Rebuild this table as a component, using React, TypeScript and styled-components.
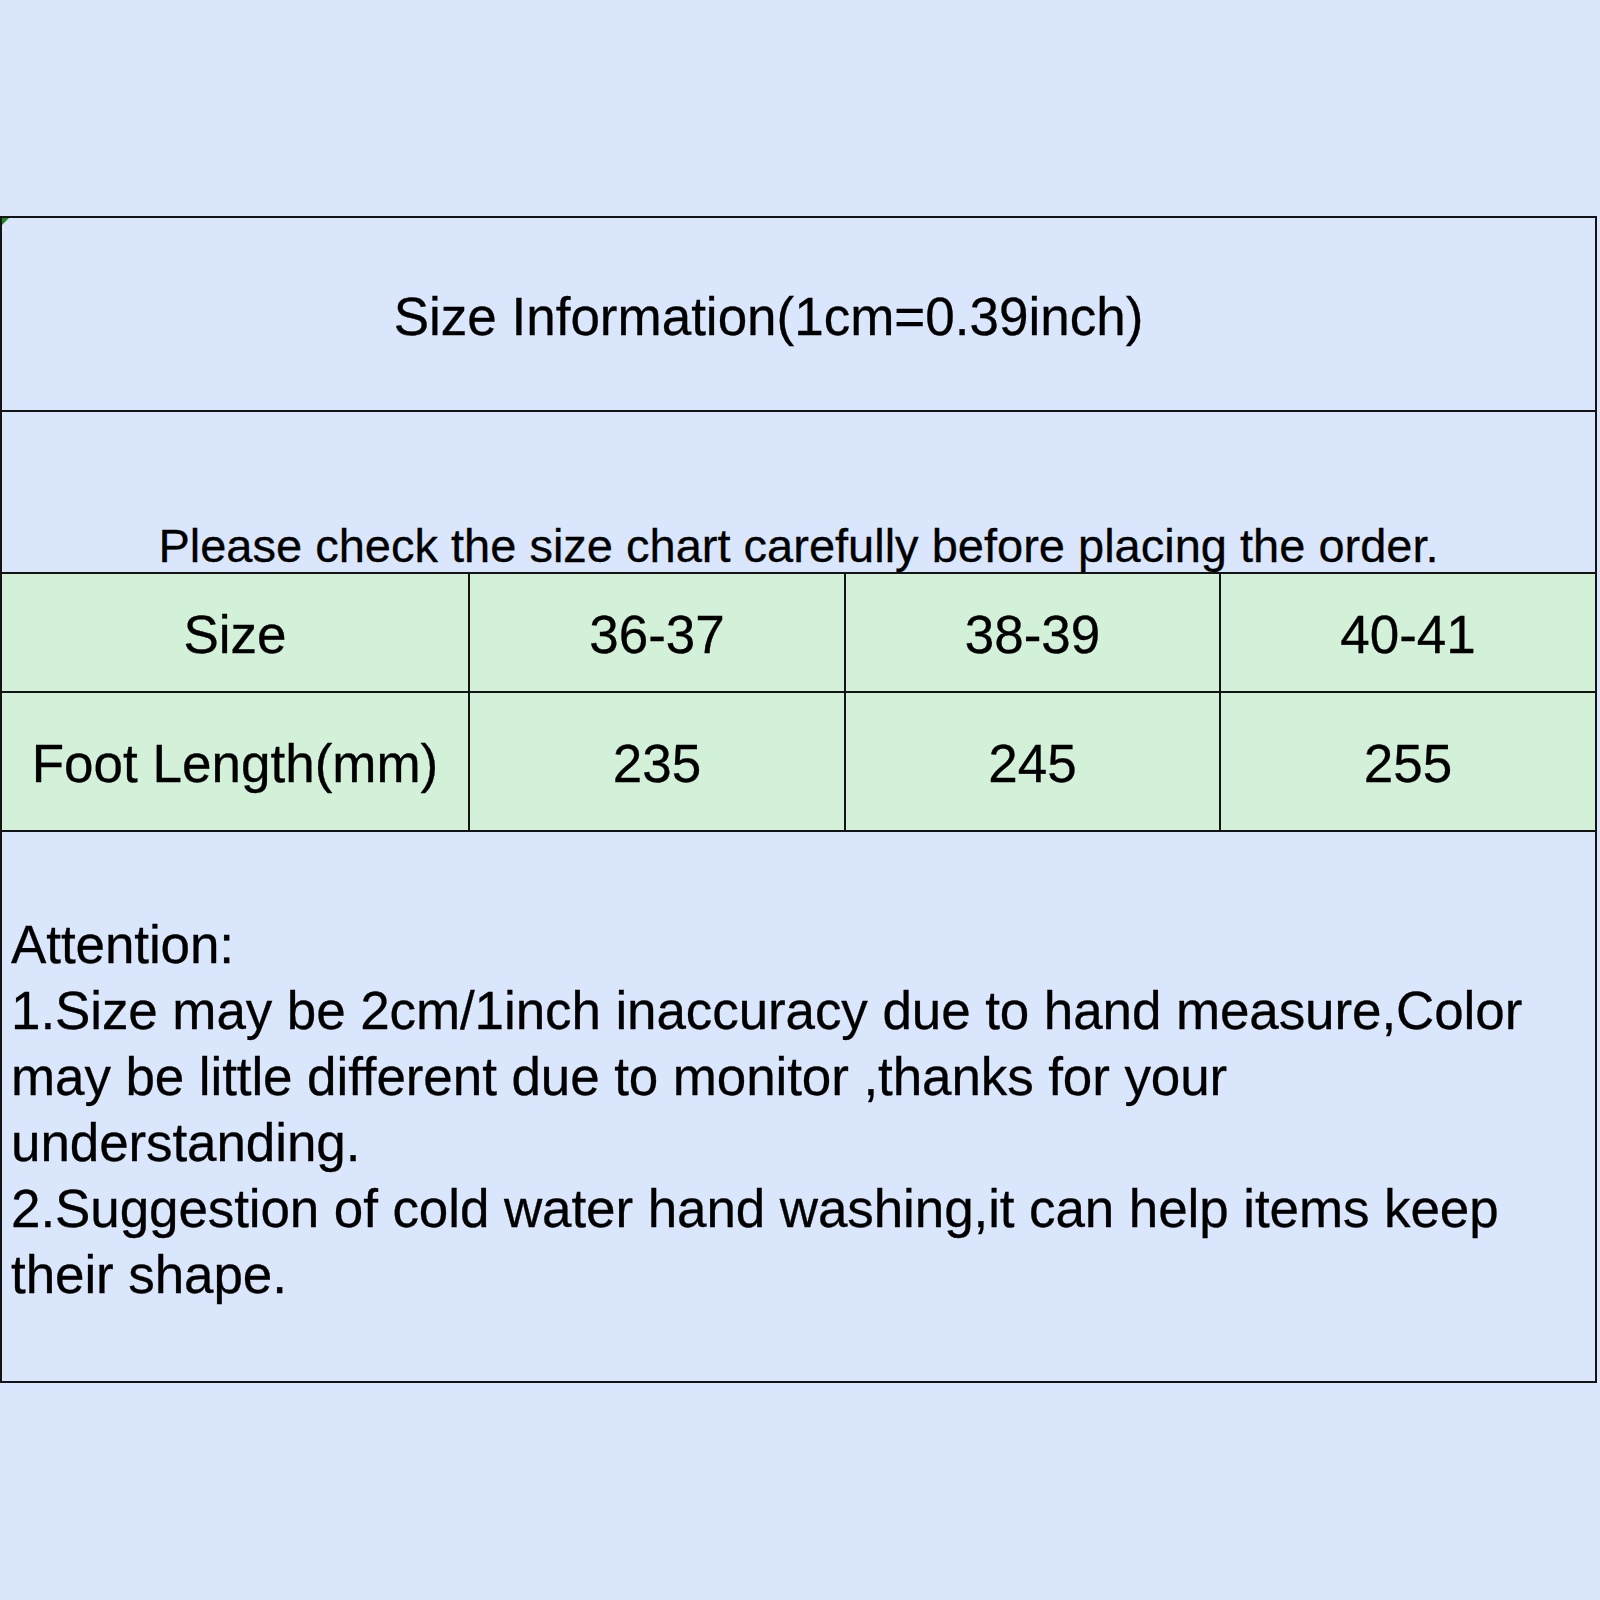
import React from "react";
import styled, { createGlobalStyle } from "styled-components";

const GlobalStyle = createGlobalStyle`
  html, body {
    margin: 0;
    padding: 0;
    background: #d9e6fb;
  }
  body {
    font-family: "Liberation Sans", Arial, sans-serif;
    color: #000;
    -webkit-text-stroke: 0.3px #000;
  }
`;

const Page = styled.div`
  width: 1600px;
  height: 1600px;
  background: #d9e6fb;
  padding-top: 216px;
  box-sizing: border-box;
`;

const Sheet = styled.div`
  position: relative;
  width: 1597px;
  box-sizing: border-box;
  border: 2px solid #141414;
  display: flex;
  flex-direction: column;
`;

const CornerMark = styled.div`
  position: absolute;
  top: 0;
  left: 0;
  width: 0;
  height: 0;
  border-top: 7px solid #1f8a1f;
  border-right: 7px solid transparent;
`;

const TitleRow = styled.div`
  height: 194px;
  box-sizing: border-box;
  border-bottom: 2px solid #141414;
  display: flex;
  align-items: center;
  justify-content: center;
  font-size: 53px;
  line-height: 53px;
  padding-top: 4px;
  padding-right: 60px;
`;

const NoticeRow = styled.div`
  height: 162px;
  box-sizing: border-box;
  border-bottom: 2px solid #141414;
  display: flex;
  align-items: flex-end;
  justify-content: center;
  font-size: 47px;
  line-height: 47px;
  padding-bottom: 3px;
`;

const GridRow = styled.div<{ $h: number }>`
  display: grid;
  grid-template-columns: 468px 376px 375px 1fr;
  height: ${(p) => p.$h}px;
  box-sizing: border-box;
  border-bottom: 2px solid #141414;
  background: #d3f0d9;
`;

const Cell = styled.div<{ $last?: boolean }>`
  display: flex;
  align-items: center;
  justify-content: center;
  box-sizing: border-box;
  padding-top: 4px;
  border-right: ${(p) => (p.$last ? "none" : "2px solid #141414")};
  font-size: 53px;
  line-height: 53px;
  white-space: nowrap;
`;

const AttentionBlock = styled.div`
  height: 549px;
  box-sizing: border-box;
  padding: 80px 0 0 9px;
  font-size: 53px;
  line-height: 66px;
  letter-spacing: -0.1px;
`;

const Line = styled.div`
  white-space: nowrap;
`;

const sizes = ["36-37", "38-39", "40-41"];
const lengths = ["235", "245", "255"];

export default function App() {
  return (
    <>
      <GlobalStyle />
      <Page>
        <Sheet>
          <CornerMark />
          <TitleRow>Size Information(1cm=0.39inch)</TitleRow>
          <NoticeRow>
            Please check the size chart carefully before placing the order.
          </NoticeRow>
          <GridRow $h={119}>
            <Cell>Size</Cell>
            {sizes.map((s, i) => (
              <Cell key={s} $last={i === sizes.length - 1}>
                {s}
              </Cell>
            ))}
          </GridRow>
          <GridRow $h={139}>
            <Cell>Foot Length(mm)</Cell>
            {lengths.map((s, i) => (
              <Cell key={s} $last={i === lengths.length - 1}>
                {s}
              </Cell>
            ))}
          </GridRow>
          <AttentionBlock>
            <Line>Attention:</Line>
            <Line>1.Size may be 2cm/1inch inaccuracy due to hand measure,Color</Line>
            <Line>may be little different due to monitor ,thanks for your</Line>
            <Line>understanding.</Line>
            <Line>2.Suggestion of cold water hand washing,it can help items keep</Line>
            <Line>their shape.</Line>
          </AttentionBlock>
        </Sheet>
      </Page>
    </>
  );
}
